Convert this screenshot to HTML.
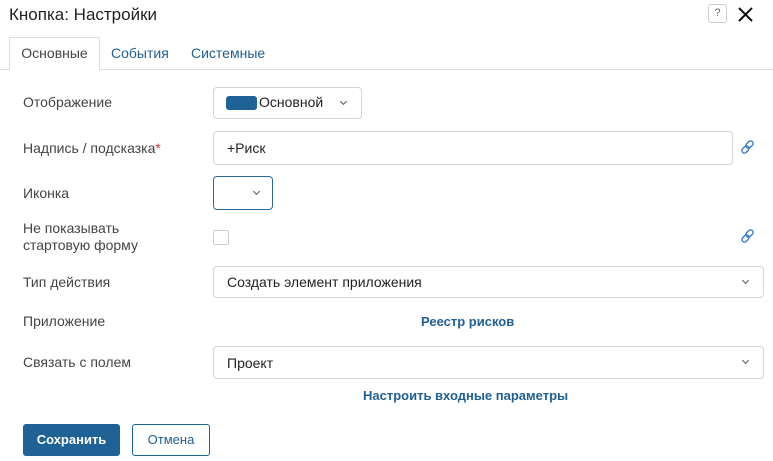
<!DOCTYPE html>
<html><head><meta charset="utf-8"><style>
*{box-sizing:border-box;margin:0;padding:0}
body{width:773px;height:461px;background:#fff;font-family:"Liberation Sans",sans-serif;font-size:14px;color:#333;position:relative;overflow:hidden}
.a{position:absolute}
.lbl{position:absolute;left:23px;color:#444;font-size:14px}
.box{position:absolute;border:1px solid #d4d4d4;border-radius:4px;background:#fff}
.chev{position:absolute;width:5px;height:5px;border-right:1.3px solid #555;border-bottom:1.3px solid #555;transform:rotate(45deg)}
.lnk{color:#1f5f94;font-weight:bold;font-size:13px;position:absolute}
</style></head><body>
<div class="a" style="left:9px;top:5px;font-size:17px;color:#222">Кнопка: Настройки</div>
<div class="a" style="left:708px;top:4px;width:19px;height:19px;border:1px solid #ccc;border-radius:3px;font-size:11px;color:#666;text-align:center;line-height:17px">?</div>
<svg class="a" style="left:737px;top:6px" width="17" height="17"><path d="M2 2L15 15M15 2L2 15" stroke="#111" stroke-width="2"/></svg>
<div class="a" style="left:0;top:69px;width:773px;height:1px;background:#ddd"></div>
<div class="a" style="left:9px;top:37px;width:91px;height:33px;border:1px solid #ddd;border-bottom:none;background:#fff;text-align:center;line-height:31px;color:#444">Основные</div>
<div class="a" style="left:111px;top:45px;color:#1f5f94">События</div>
<div class="a" style="left:191px;top:45px;color:#1f5f94">Системные</div>

<div class="lbl" style="top:94px">Отображение</div>
<div class="box" style="left:213px;top:87px;width:149px;height:32px"></div>
<div class="a" style="left:226px;top:96px;width:31px;height:14px;background:#1f6396;border-radius:3px"></div>
<div class="a" style="left:259px;top:94px;color:#222">Основной</div>
<div class="chev" style="left:341px;top:99px"></div>

<div class="lbl" style="top:140px">Надпись / подсказка<span style="color:#d33">*</span></div>
<div class="box" style="left:213px;top:131px;width:520px;height:34px"></div>
<div class="a" style="left:227px;top:140px;color:#222">+Риск</div>
<svg class="a" style="left:740px;top:139px" width="16" height="16" fill="none" stroke="#3a7bbf" stroke-width="1.4"><rect x="7" y="1.5" width="5" height="8" rx="2.5" transform="rotate(45 9.5 5.5)"/><rect x="3" y="6.5" width="5" height="8" rx="2.5" transform="rotate(45 5.5 10.5)"/></svg>

<div class="lbl" style="top:185px">Иконка</div>
<div class="box" style="left:213px;top:176px;width:60px;height:34px;border-color:#2a6aa3"></div>
<div class="chev" style="left:254px;top:189px"></div>

<div class="lbl" style="top:220px;line-height:17px">Не показывать<br>стартовую форму</div>
<div class="a" style="left:213px;top:230px;width:16px;height:15px;border:1px solid #ccc;border-radius:2px"></div>
<svg class="a" style="left:740px;top:228px" width="16" height="16" fill="none" stroke="#3a7bbf" stroke-width="1.4"><rect x="7" y="1.5" width="5" height="8" rx="2.5" transform="rotate(45 9.5 5.5)"/><rect x="3" y="6.5" width="5" height="8" rx="2.5" transform="rotate(45 5.5 10.5)"/></svg>

<div class="lbl" style="top:274px">Тип действия</div>
<div class="box" style="left:213px;top:266px;width:551px;height:32px"></div>
<div class="a" style="left:227px;top:274px;color:#222">Создать элемент приложения</div>
<div class="chev" style="left:743px;top:278px"></div>

<div class="lbl" style="top:313px">Приложение</div>
<div class="lnk" style="left:421px;top:314px">Реестр рисков</div>

<div class="lbl" style="top:354px">Связать с полем</div>
<div class="box" style="left:213px;top:346px;width:551px;height:33px"></div>
<div class="a" style="left:227px;top:355px;color:#222">Проект</div>
<div class="chev" style="left:743px;top:358px"></div>

<div class="lnk" style="left:363px;top:388px">Настроить входные параметры</div>

<div class="a" style="left:23px;top:424px;width:97px;height:32px;background:#1f6396;border-radius:3px;color:#fff;font-weight:bold;font-size:13px;text-align:center;line-height:32px">Сохранить</div>
<div class="a" style="left:132px;top:424px;width:78px;height:32px;border:1px solid #1f6396;border-radius:3px;color:#1f5f94;font-size:13px;text-align:center;line-height:30px">Отмена</div>
</body></html>
